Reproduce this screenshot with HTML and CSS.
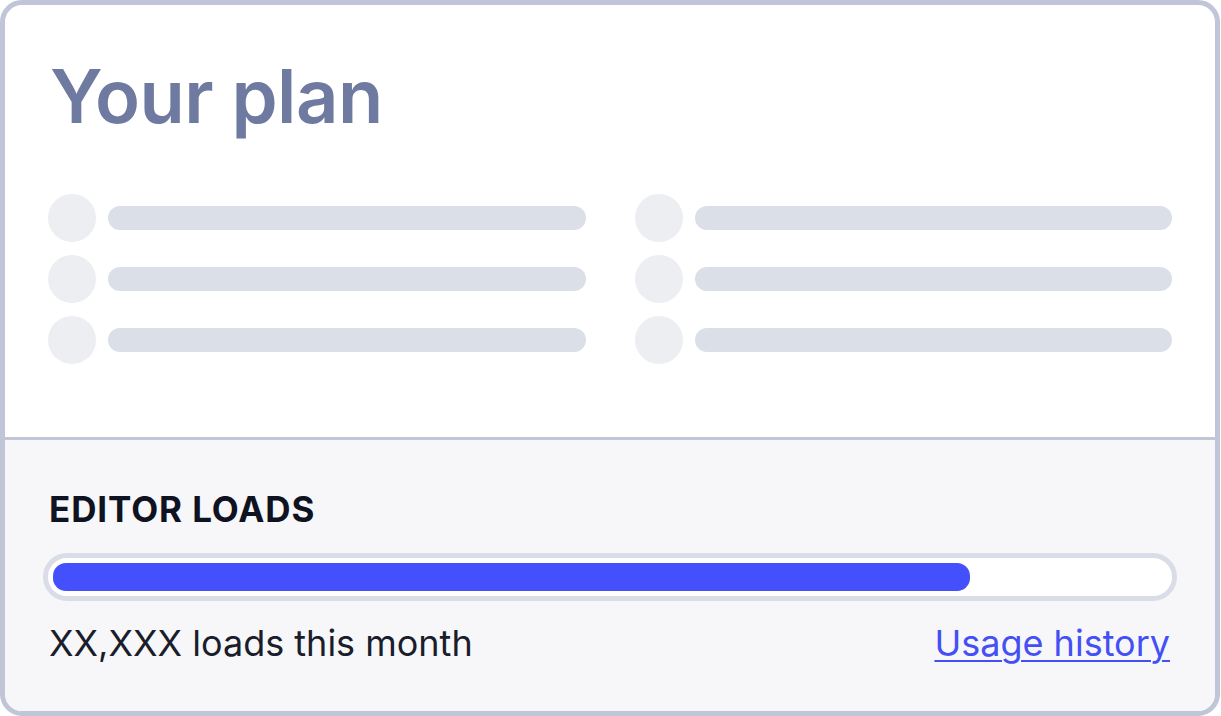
FILE: index.html
```html
<!DOCTYPE html>
<html>
<head>
<meta charset="utf-8">
<link rel="stylesheet" href="styles.css">
</head>
<body>
<div class="card">
  <section class="plan">
    <h1 class="plan-title">Your plan</h1>
    <div class="skeleton">
      <div class="sk-row"><span class="sk-dot"></span><span class="sk-bar"></span></div>
      <div class="sk-row"><span class="sk-dot"></span><span class="sk-bar"></span></div>
      <div class="sk-row"><span class="sk-dot"></span><span class="sk-bar"></span></div>
      <div class="sk-row"><span class="sk-dot"></span><span class="sk-bar"></span></div>
      <div class="sk-row"><span class="sk-dot"></span><span class="sk-bar"></span></div>
      <div class="sk-row"><span class="sk-dot"></span><span class="sk-bar"></span></div>
    </div>
  </section>
  <section class="usage">
    <h2 class="usage-title">EDITOR LOADS</h2>
    <div class="progress"><div class="progress-fill" style="width: 82.3%"></div></div>
    <div class="usage-foot">
      <span class="usage-count">XX,XXX loads this month</span>
      <a class="usage-link" href="#">Usage history</a>
    </div>
  </section>
</div>
</body>
</html>
```

FILE: styles.css
```css
html, body {
  margin: 0;
  padding: 0;
  background: #ffffff;
}

body {
  font-family: Inter, "Noto Sans", "Liberation Sans", sans-serif;
}

.card {
  box-sizing: border-box;
  width: 1220px;
  height: 716px;
  border: 5px solid #c0c5d8;
  border-radius: 22px;
  overflow: hidden;
  display: flex;
  flex-direction: column;
  background: #ffffff;
}

.plan {
  padding: 47px 43px 0 43px;
  height: 435px;
  flex: none;
  box-sizing: border-box;
  border-bottom: 3px solid #c0c5d8;
}

.plan-title {
  margin: 0 0 0 2px;
  font-size: 74px;
  line-height: 1.2;
  font-weight: 600;
  color: #6e7aa0;
  letter-spacing: -0.5px;
}

.skeleton {
  margin-top: 53px;
  display: grid;
  grid-template-columns: 1fr 1fr;
  grid-auto-flow: column;
  grid-template-rows: repeat(3, 48px);
  column-gap: 49px;
  row-gap: 13px;
}

.sk-row {
  display: flex;
  align-items: center;
  gap: 12px;
}

.sk-dot {
  width: 48px;
  height: 48px;
  border-radius: 50%;
  background: #edeef2;
  flex: none;
}

.sk-bar {
  flex: 1;
  height: 24px;
  border-radius: 12px;
  background: #dbdfe8;
}

.usage {
  flex: 1;
  background: #f7f7f9;
  padding: 48px 43px 0 44px;
}

.usage-title {
  margin: 0;
  font-size: 35px;
  line-height: 1.2;
  font-weight: 700;
  color: #0f1220;
  letter-spacing: 0.9px;
}

.progress {
  margin: 23px -5px 0 -6px;
  height: 48px;
  box-sizing: border-box;
  border: 5px solid #dadde8;
  border-radius: 24px;
  background: #ffffff;
  padding: 5px;
}

.progress-fill {
  height: 100%;
  border-radius: 13px;
  background: #4450fb;
}

.usage-foot {
  margin-top: 21px;
  display: flex;
  justify-content: space-between;
  align-items: baseline;
  font-size: 36px;
  line-height: 1.2;
}

.usage-count {
  color: #1a1d2b;
}

.usage-link {
  color: #4450f5;
  text-decoration: underline;
  text-underline-offset: 4px;
  text-decoration-thickness: 2px;
  margin-right: 2px;
}
```
